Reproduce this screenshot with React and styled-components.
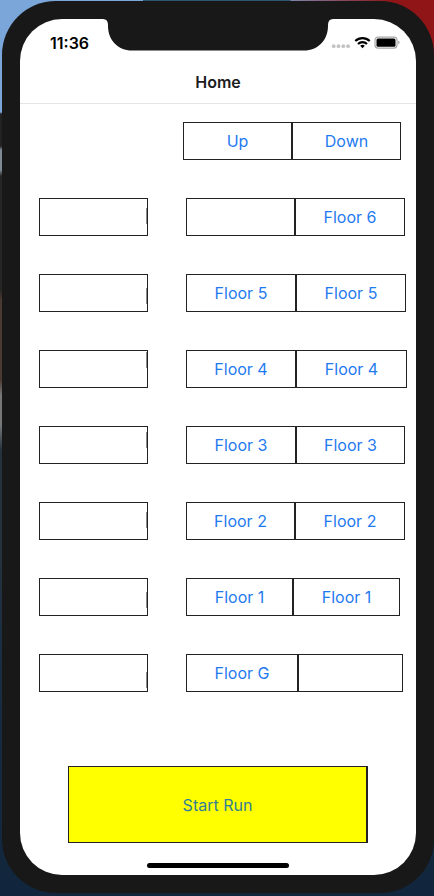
import React from "react";
import styled, { createGlobalStyle } from "styled-components";

const GlobalStyle = createGlobalStyle`
  *, *::before, *::after { box-sizing: border-box; }
  body {
    margin: 0;
    font-family: Inter, "Liberation Sans", sans-serif;
    -webkit-font-smoothing: antialiased;
  }
`;

const Desktop = styled.div`
  min-height: 100vh;
  display: flex;
  padding: 1px 0 3px 2px;
  background:
    linear-gradient(#2c566f, #2c566f) top center / 34% 1px no-repeat,
    linear-gradient(90deg, transparent 60%, #8f1517 90%) top / 100% 112px no-repeat,
    linear-gradient(
      #7ba6da 0 112px,
      #222 114px 146px,
      #7f8a94 150px 170px,
      #262626 176px 290px,
      #4a3a32 300px 380px,
      #77787a 395px 425px,
      #24323e 450px 560px,
      #1b2e42 640px,
      #11263c 100%
    );
`;

const Phone = styled.div`
  flex: 1;
  display: flex;
  padding: 18px;
  border-radius: 54px;
  background: #181818;
`;

const Screen = styled.main`
  flex: 1;
  min-width: 0;
  position: relative;
  display: flex;
  flex-direction: column;
  border-radius: 42px;
  background: #fff;
  overflow: hidden;
`;

const Notch = styled.svg`
  position: absolute;
  top: 0;
  left: 50%;
  width: 230px;
  height: 32px;
  transform: translateX(-50%);
`;

const StatusBar = styled.div`
  display: flex;
  align-items: center;
  justify-content: space-between;
  height: 42px;
  padding: 6px 16px 0 30px;
`;

const Clock = styled.time`
  font-size: 16px;
  line-height: 20px;
  font-weight: 600;
  color: #000;
`;

const StatusIcons = styled.svg`
  width: 70px;
  height: 14px;
`;

const NavBar = styled.header`
  display: flex;
  align-items: center;
  justify-content: center;
  height: 43px;
  border-bottom: 1px solid #e4e4e4;
`;

const Title = styled.h1`
  margin: 0;
  font-size: 16px;
  line-height: 20px;
  font-weight: 600;
  color: #1c1c1e;
`;

const Floors = styled.section`
  display: flex;
  flex-direction: column;
  gap: 38px;
  padding: 18px 0 0 19px;
`;

const FloorRow = styled.div`
  display: grid;
  grid-template-columns: ${(p) => p.$columns};
  height: 38px;
`;

const Shaft = styled.div`
  display: flex;
  justify-content: flex-end;
  border: 1px solid #222;

  &::after {
    content: "";
    width: 1px;
    height: 16px;
    margin-top: ${(p) => p.$marker}px;
    background: #8c8c8c;
  }
`;

const CallButton = styled.button`
  min-width: 0;
  padding: 0;
  border: 1px solid #222;
  border-radius: 0;
  background: #fff;
  font: inherit;
  font-size: 16px;
  line-height: 20px;
  color: #1f7af0;
  cursor: pointer;
`;

const Footer = styled.footer`
  flex: 1;
  display: flex;
  flex-direction: column;
  justify-content: space-between;
  padding: 74px 48px 7px;
`;

const StartButton = styled(CallButton)`
  height: 77px;
  border-right-width: 2px;
  background: #ff0;
  color: #337f93;
`;

const HomeIndicator = styled.div`
  align-self: center;
  width: 142px;
  height: 5px;
  border-radius: 3px;
  background: #000;
`;

const rows = [
  { id: "6", up: "", down: "Floor 6", marker: 9, widths: [109, 38, 109, 110, 11] },
  { id: "5", up: "Floor 5", down: "Floor 5", marker: 13, widths: [109, 38, 110, 110, 10] },
  { id: "4", up: "Floor 4", down: "Floor 4", marker: 1, widths: [109, 38, 110, 111, 9] },
  { id: "3", up: "Floor 3", down: "Floor 3", marker: 5, widths: [109, 38, 110, 109, 11] },
  { id: "2", up: "Floor 2", down: "Floor 2", marker: 9, widths: [109, 38, 109, 110, 11] },
  { id: "1", up: "Floor 1", down: "Floor 1", marker: 13, widths: [109, 38, 107, 107, 16] },
  { id: "G", up: "Floor G", down: "", marker: 17, widths: [109, 38, 112, 105, 13] },
];

const headingWidths = [109, 35, 109, 109, 15];

const toColumns = (widths) => widths.map((w) => `${w}fr`).join(" ");

export default function App() {
  return (
    <Desktop>
      <GlobalStyle />
      <Phone>
        <Screen>
          <Notch viewBox="0 0 230 32" aria-hidden="true">
            <path
              d="M0 0H230Q225 0 225 6V7C225 21 215 31.500 201 31.500H29C15 31.500 5 21 5 7V6Q5 0 0 0Z"
              fill="#181818"
            />
          </Notch>
          <StatusBar>
            <Clock>11:36</Clock>
            <StatusIcons viewBox="0 0 70 14" aria-hidden="true">
              <g fill="#c4c4c4">
                <circle cx="3.700" cy="10.200" r="1.900" />
                <circle cx="8.500" cy="10.200" r="1.900" />
                <circle cx="13.300" cy="10.200" r="1.900" />
                <circle cx="18.100" cy="10.200" r="1.900" />
              </g>
              <g fill="none" stroke="#000" strokeWidth="2.200">
                <path d="M25.300 5a10.300 10.300 0 0 1 14.400 0" />
                <path d="M28 8a6.500 6.500 0 0 1 9 0" />
              </g>
              <path d="M30.200 9.800a3.600 3.600 0 0 1 4.600 0L32.500 12.300Z" fill="#000" />
              <rect x="45" y="1.100" width="22" height="11" rx="3" fill="none" stroke="#a8a8a8" strokeWidth="1.200" />
              <rect x="46.500" y="2.500" width="19" height="8.200" rx="1.500" fill="#000" />
              <path d="M68.200 4.600q1.400.6 1.400 1.900t-1.400 1.900Z" fill="#a8a8a8" />
            </StatusIcons>
          </StatusBar>
          <NavBar>
            <Title>Home</Title>
          </NavBar>
          <Floors>
            <FloorRow $columns={toColumns(headingWidths)}>
              <span />
              <span />
              <CallButton type="button">Up</CallButton>
              <CallButton type="button">Down</CallButton>
            </FloorRow>
            {rows.map((row) => (
              <FloorRow key={row.id} $columns={toColumns(row.widths)}>
                <Shaft $marker={row.marker} />
                <span />
                <CallButton type="button" aria-label={row.up || `Floor ${row.id} up`}>
                  {row.up}
                </CallButton>
                <CallButton type="button" aria-label={row.down || `Floor ${row.id} down`}>
                  {row.down}
                </CallButton>
              </FloorRow>
            ))}
          </Floors>
          <Footer>
            <StartButton type="button">Start Run</StartButton>
            <HomeIndicator />
          </Footer>
        </Screen>
      </Phone>
    </Desktop>
  );
}
